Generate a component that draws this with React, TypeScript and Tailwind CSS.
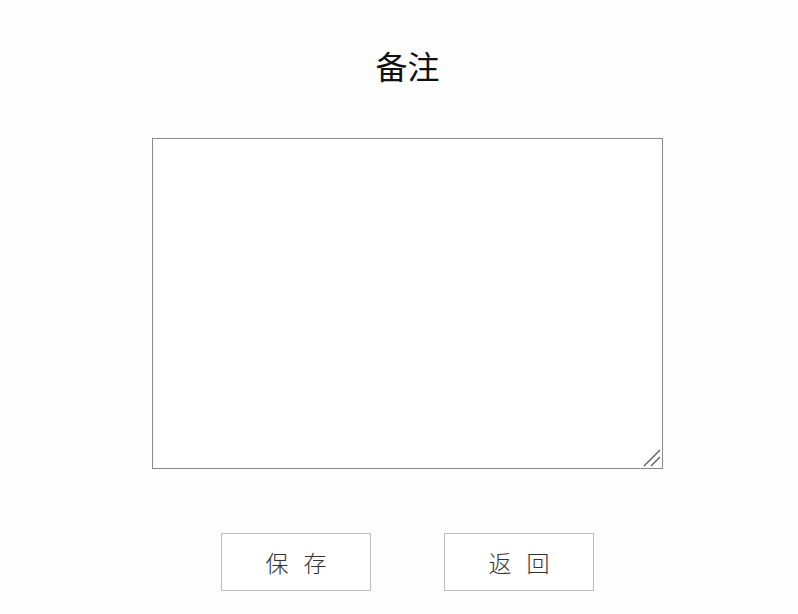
function FormButton({ chars }: { chars: string[] }) {
  return (
    <button className="flex h-[58px] w-[150px] items-center justify-center gap-[15px] border border-[#bcbcbc] bg-white text-[23px] font-light text-[#333]">
      {chars.map((c) => (
        <span key={c}>{c}</span>
      ))}
    </button>
  );
}

export default function App() {
  return (
    <div
      className="flex min-h-[614px] w-full flex-col items-center bg-[#fdfdfd] pl-[17px]"
      style={{ fontFamily: '"Noto Sans CJK SC", "Noto Sans", sans-serif' }}
    >
      <h1 className="mt-[47px] text-[32px] leading-[36px] font-normal text-[#111]">备注</h1>
      <div className="relative mt-[55px]">
        <textarea
          className="block h-[331px] w-[511px] resize-none border border-[#8a8a8a] bg-white p-2 text-sm outline-none"
          defaultValue=""
        />
        <svg
          className="pointer-events-none absolute right-[2px] bottom-[2px]"
          width="18"
          height="18"
          viewBox="0 0 18 18"
        >
          <line x1="1" y1="17" x2="17" y2="1" stroke="#555" strokeWidth="1.2" />
          <line x1="8" y1="17" x2="17" y2="8" stroke="#555" strokeWidth="1.2" />
        </svg>
      </div>
      <div className="mt-[64px] flex gap-[73px]">
        <FormButton chars={["保", "存"]} />
        <FormButton chars={["返", "回"]} />
      </div>
    </div>
  );
}
